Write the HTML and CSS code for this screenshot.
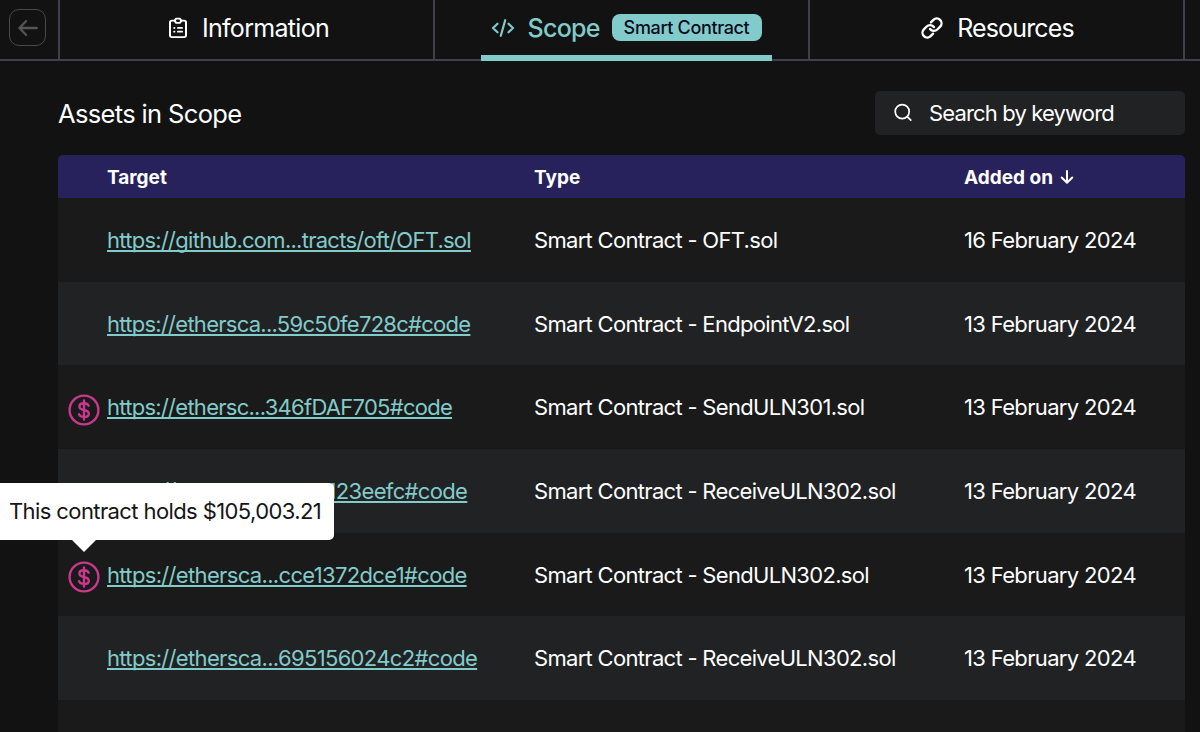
FILE: index.html
```html
<!DOCTYPE html>
<html lang="en">
<head>
<meta charset="utf-8">
<title>Assets in Scope</title>
<link rel="stylesheet" href="styles.css">
</head>
<body>
<nav class="tabs">
  <div class="back-cell">
    <button class="back" aria-label="Back">
      <svg width="20" height="16" viewBox="0 0 20 16"><path d="M8 1.200 1.400 8 8 14.800M1.800 8H18.800"/></svg>
    </button>
  </div>
  <a class="tab tab-info">
    <svg width="18" height="22" viewBox="1 0 18 24" preserveAspectRatio="none"><path d="M6.500 4H4Q2 4 2 6V20Q2 22 4 22H16Q18 22 18 20V6Q18 4 16 4H13.500"/><path d="M8.200 1.700H11.800L13.400 4.200 11.800 6.400H8.200L6.600 4.200Z"/><path d="M6.200 11.900H6.400M10 11.900H14M6.200 16H6.400M10 16H14"/></svg>
    <span class="tab-label label-info">Information</span>
  </a>
  <a class="tab tab-active">
    <span class="active-inner">
      <svg class="icon-code" width="24" height="20" viewBox="0 0 24 20"><path d="M6.500 5.700 2 10 6.500 14.300M17.500 5.700 22 10 17.500 14.300M14.200 2.200 9.800 17.800"/></svg>
      <span class="tab-label label-scope">Scope</span>
      <span class="badge">Smart Contract</span>
    </span>
  </a>
  <a class="tab">
    <svg class="icon-link" width="22" height="22" viewBox="0.500 0.500 23 23"><path d="M10 13a5 5 0 0 0 7.540.540l3-3a5 5 0 0 0-7.070-7.070l-2.600 2.600"/><path d="M14 11a5 5 0 0 0-7.540-.540l-3 3a5 5 0 0 0 7.070 7.070l2.600-2.600"/></svg>
    <span class="tab-label label-res">Resources</span>
  </a>
  <div></div>
</nav>
<main class="content">
  <header class="toolbar">
    <h1 class="title">Assets in Scope</h1>
    <label class="search">
      <svg width="20" height="20" viewBox="0 0 20 20"><circle cx="9.200" cy="8.600" r="7"/><path d="M14.400 13.800 17.800 17.100"/></svg>
      <span>Search by keyword</span>
    </label>
  </header>
  <section class="table">
    <div class="row head">
      <span class="h-target">Target</span><span>Type</span>
      <span class="h-date">Added on <svg width="14" height="16" viewBox="0 0 14 16"><path d="M7 2V13.500M1.700 8.500 7 13.700 12.300 8.500"/></svg></span>
    </div>
    <div class="row"><div class="target"><a>https://github.com...tracts/oft/OFT.sol</a></div><span>Smart Contract - OFT.sol</span><span class="date">16 February 2024</span></div>
    <div class="row"><div class="target"><a>https://ethersca...59c50fe728c#code</a></div><span>Smart Contract - EndpointV2.sol</span><span class="date">13 February 2024</span></div>
    <div class="row"><div class="target"><i class="coin"><svg width="32" height="32" viewBox="0 0 32 32"><circle cx="16" cy="16" r="14.400"/><path d="M20.600 11.700Q19.600 9.200 16 9.200Q11.400 9.200 11.400 12.400Q11.400 15 16 16Q20.800 17 20.800 19.900Q20.800 22.900 16 22.900Q11.800 22.900 11.100 20.200M16 6.500V25.500"/></svg></i><a>https://ethersc...346fDAF705#code</a></div><span>Smart Contract - SendULN301.sol</span><span class="date">13 February 2024</span></div>
    <div class="row"><div class="target"><a class="wide">https://ethersca...7bcd123eefc#code</a></div><span>Smart Contract - ReceiveULN302.sol</span><span class="date">13 February 2024</span></div>
    <div class="row"><div class="target"><i class="coin"><svg width="32" height="32" viewBox="0 0 32 32"><circle cx="16" cy="16" r="14.400"/><path d="M20.600 11.700Q19.600 9.200 16 9.200Q11.400 9.200 11.400 12.400Q11.400 15 16 16Q20.800 17 20.800 19.900Q20.800 22.900 16 22.900Q11.800 22.900 11.100 20.200M16 6.500V25.500"/></svg><b class="tooltip">This contract holds $105,003.21</b></i><a class="wide">https://ethersca...cce1372dce1#code</a></div><span>Smart Contract - SendULN302.sol</span><span class="date">13 February 2024</span></div>
    <div class="row"><div class="target"><a class="wide">https://ethersca...695156024c2#code</a></div><span>Smart Contract - ReceiveULN302.sol</span><span class="date">13 February 2024</span></div>
    <div class="row last"></div>
  </section>
</main>
</body>
</html>
```
FILE: styles.css
```css
* { box-sizing: border-box; }
body { margin: 0; height: 732px; overflow: hidden; background: #121212; color: #fff; font-family: Inter, "Liberation Sans", sans-serif; font-size: 22px; letter-spacing: -0.69px; }
svg { fill: none; stroke: currentColor; stroke-width: 2; stroke-linecap: round; stroke-linejoin: round; flex: none; }
.tabs { display: grid; grid-template-columns: 60px 375px 375px 375px 15px; height: 61px; border-bottom: 2px solid #3e404b; }
.back-cell { border-right: 2px solid #3e404b; padding: 9px 0 0 9px; }
.back { display: flex; align-items: center; justify-content: center; width: 37px; height: 37px; padding: 0; border: 1px solid #494949; border-radius: 10px; background: none; color: #555; }
.back svg { stroke-width: 2.3; }
.tab { display: flex; align-items: center; justify-content: center; border-right: 2px solid #3e404b; padding: 0 0 5px 2px; }
.tab-info { padding-left: 5px; }
.tab-label { font-size: 25px; line-height: 30px; white-space: nowrap; }
.label-info { margin-left: 15px; }
.label-scope { font-weight: 500; margin: 0 11px 0 13px; width: 73px; }
.label-res { margin-left: 14px; letter-spacing: -0.85px; }
.icon-link { stroke-width: 2.5; }
.icon-code { stroke-width: 2.2; }
.tab-active { color: #82cbcb; padding: 0 0 0 9px; align-items: stretch; }
.active-inner { display: flex; align-items: center; width: 291px; height: 61px; padding: 0 10px; border-bottom: 6px solid #82cbcb; }
.badge { flex: none; width: 150px; height: 27px; line-height: 27px; border-radius: 8px; background: #82cbcb; color: #080b1c; text-align: center; font-size: 18px; font-weight: 500; letter-spacing: -0.35px; }
.content { padding: 30px 15px 0 58px; }
.toolbar { display: flex; justify-content: space-between; align-items: center; height: 44px; }
.title { margin: 0; font-size: 25.500px; font-weight: 400; letter-spacing: -0.65px; }
.search { display: flex; align-items: center; width: 310px; height: 44px; padding-left: 18px; gap: 16px; border-radius: 5px; background: #212224; letter-spacing: -0.85px; }
.search svg { stroke-width: 1.7; }
.table { margin-top: 20px; }
.row { display: grid; grid-template-columns: 476px 430px 221px; align-items: center; height: 83.7px; background: #1a1a1a; white-space: nowrap; }
.row:nth-child(odd) { background: #212224; }
.date { letter-spacing: -0.66px; }
.head.row { height: 43px; padding-top: 1px; background: #28225c; border-radius: 5px 5px 0 0; font-size: 19px; font-weight: 700; letter-spacing: 0; }
.last.row { height: 32px; background: #1a1a1a; }
.h-target { padding-left: 49px; }
.h-date svg { margin-left: 3px; vertical-align: -1px; }
.target { position: relative; padding-left: 49px; color: #82cbcb; }
.target a { letter-spacing: -0.73px; text-decoration: underline; text-decoration-thickness: 2px; text-underline-offset: 2px; text-decoration-skip-ink: none; }
.target .wide { letter-spacing: -0.66px; }
.coin { position: absolute; left: 9.5px; top: -0.5px; width: 32px; height: 32px; color: #c9388c; }
.coin svg { display: block; stroke-width: 2.4; }
.tooltip { position: absolute; z-index: 2; left: -72.5px; bottom: 53.5px; width: 339px; height: 57px; padding-left: 14px; border-radius: 5px; background: #fff; color: #151515; font-style: normal; font-weight: 400; line-height: 57px; letter-spacing: -0.6px; }
.tooltip::after { content: ""; position: absolute; left: 77px; top: 57px; border: 12px solid transparent; border-bottom: 0; border-top-color: #fff; }
```
